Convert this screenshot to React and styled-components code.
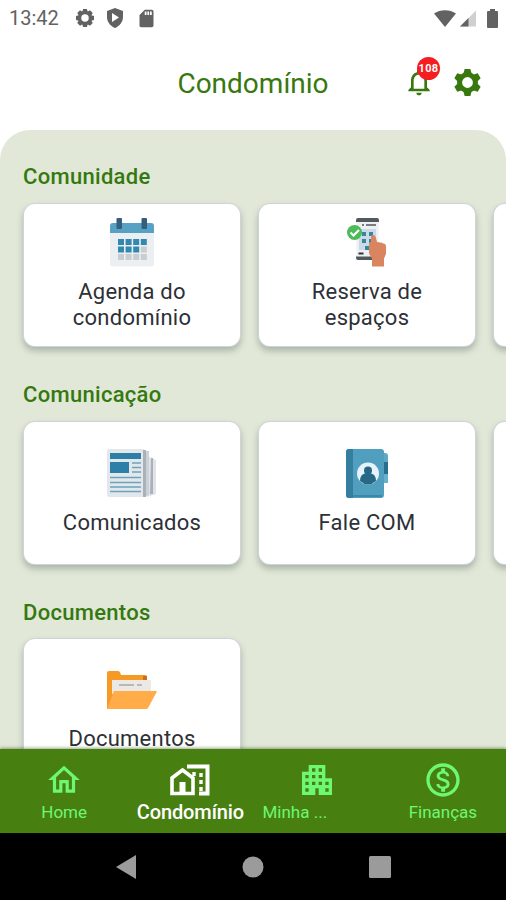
import React from 'react';
import styled, { createGlobalStyle } from 'styled-components';
import {
  MdApartment,
  MdNotificationsNone,
  MdOutlineHome,
  MdOutlineMonetizationOn,
  MdSdCard,
} from 'react-icons/md';

const GlobalStyle = createGlobalStyle`
  * {
    box-sizing: border-box;
  }
  body {
    margin: 0;
    background: #fff;
    font-family: Roboto, 'Liberation Sans', sans-serif;
    overflow: hidden;
  }
  svg {
    display: block;
    flex-shrink: 0;
  }
`;

const Screen = styled.div`
  width: 506px;
  height: 900px;
  display: flex;
  flex-direction: column;
  overflow: hidden;
`;

const StatusBar = styled.div`
  height: 36px;
  display: flex;
  align-items: center;
  justify-content: space-between;
  padding: 0 8px 0 9px;
  color: #626262;
`;

const StatusGroup = styled.div`
  display: flex;
  align-items: center;
  gap: ${(props) => props.$gap}px;
`;

const Clock = styled.span`
  font-size: 20px;
  line-height: 36px;
  margin-right: 5px;
`;

const Battery = styled.div`
  margin-left: 7px;
`;

const Header = styled.header`
  height: 94px;
  display: grid;
  grid-template-columns: 1fr auto 1fr;
  align-items: center;
  color: #38780f;
`;

const PageTitle = styled.h1`
  grid-column: 2;
  margin: 1px 0 0;
  font-size: 28px;
  line-height: 34px;
  font-weight: 400;
`;

const Actions = styled.div`
  display: flex;
  align-items: center;
  justify-content: flex-end;
  gap: 19px;
  padding: 0 25px 2px 0;
`;

const Bell = styled.div`
  position: relative;
`;

const Badge = styled.span`
  position: absolute;
  top: -9px;
  right: -5px;
  width: 23px;
  height: 23px;
  border-radius: 50%;
  background: #f51d1f;
  color: #fff;
  font-size: 11px;
  line-height: 23px;
  font-weight: 700;
  letter-spacing: 0.3px;
  text-align: center;
`;

const Panel = styled.main`
  flex: 1;
  min-height: 0;
  overflow: hidden;
  padding: 30px 0 0 24px;
  border-radius: 30px 30px 0 0;
  background: #e2e8d8;
`;

const SectionTitle = styled.h2`
  margin: 0 0 10px -1px;
  font-size: 22px;
  line-height: 34px;
  font-weight: 500;
  letter-spacing: 0.3px;
  color: #34790f;
`;

const Section = styled.section`
  height: 218px;
  &:last-child ${SectionTitle} {
    margin-bottom: 9px;
  }
`;

const CardRow = styled.div`
  display: flex;
  gap: 19px;
`;

const Card = styled.div`
  flex: 0 0 216px;
  height: 142px;
  display: flex;
  flex-direction: column;
  align-items: center;
  justify-content: center;
  padding-bottom: 2px;
  border-radius: 11px;
  background: #fff;
  box-shadow: 0 0 0 1px #cdd5d8, 0 4px 6px 1px rgba(90, 105, 100, 0.4);
`;

const CardLabel = styled.span`
  margin-top: 12px;
  max-width: 150px;
  font-size: 22px;
  line-height: 26px;
  letter-spacing: 0.25px;
  text-align: center;
  color: #2d3036;
`;

const TabBar = styled.nav`
  height: 84px;
  display: grid;
  grid-template-columns: repeat(4, 1fr);
  padding-left: 1px;
  background: #487f11;
  box-shadow: 0 -1px 3px rgba(50, 80, 20, 0.5);
  z-index: 1;
`;

const Tab = styled.div`
  display: flex;
  flex-direction: column;
  align-items: center;
  padding-top: 11px;
  color: ${(props) => (props.$active ? '#fff' : '#6cf872')};
`;

const TabIcon = styled.div`
  height: 40px;
  display: flex;
  align-items: center;
`;

const TabLabel = styled.span`
  align-self: ${(props) => (props.$start ? 'flex-start' : 'center')};
  padding-left: ${(props) => (props.$start ? 9 : 0)}px;
  font-size: ${(props) => (props.$active ? 20 : 17)}px;
  font-weight: ${(props) => (props.$active ? 500 : 400)};
  line-height: 24px;
  letter-spacing: ${(props) => (props.$active ? -0.1 : 0)}px;
  white-space: nowrap;
`;

const SystemBar = styled.div`
  height: 67px;
  display: grid;
  grid-template-columns: repeat(3, 127px);
  justify-content: center;
  justify-items: center;
  align-items: center;
  background: #000;
  color: #9b9b9b;
`;

function GearIcon({ size, teeth, hole }) {
  const angles = Array.from({ length: teeth }, (_, i) => (360 / teeth) * i);
  return (
    <svg width={size} height={size} viewBox="0 0 28 28" fill="currentColor">
      {angles.map((angle) => (
        <path key={angle} d="M11 0h6l1.500 6h-9z" transform={`rotate(${angle} 14 14)`} />
      ))}
      <circle cx="14" cy="14" r={(10.8 + hole) / 2} fill="none" stroke="currentColor" strokeWidth={10.8 - hole} />
    </svg>
  );
}

function ShieldIcon() {
  return (
    <svg width="18" height="20" viewBox="0 0 18 20" fill="currentColor">
      <path fillRule="evenodd" d="M9 0l8 3v6c0 5-3.200 8.900-8 11-4.800-2.100-8-6-8-11V3zM6 5v9l7-4.500z" />
    </svg>
  );
}

function WifiIcon() {
  return (
    <svg width="22" height="17" viewBox="0 0 22 17" fill="currentColor">
      <path d="M0 3.500C6-1 16-1 22 3.500L11 17z" />
    </svg>
  );
}

function SignalIcon() {
  return (
    <svg width="16" height="17" viewBox="0 0 17 17">
      <path d="M17 0v17H0z" fill="#d0d0d0" />
      <path d="M9 8v9H0z" fill="currentColor" />
    </svg>
  );
}

function BatteryIcon() {
  return (
    <svg width="11" height="19" viewBox="0 0 11 19" fill="currentColor">
      <path d="M3 0h5v2h2q1 0 1 1v15q0 1-1 1H1q-1 0-1-1V3q0-1 1-1h2z" />
    </svg>
  );
}

function CalendarIcon() {
  const cells = [0, 1, 2, 3, 4, 5, 6, 7, 8, 9, 10, 11];
  return (
    <svg width="44" height="49" viewBox="0 0 44 49">
      <rect y="5" width="44" height="43.500" rx="3" fill="#eceff2" />
      <path d="M0 15V8q0-3 3-3h38q3 0 3 3v7z" fill="#56a2c5" />
      <rect x="6.500" y="0" width="5.500" height="11" rx="1" fill="#365d7e" />
      <rect x="31.500" y="0" width="5.500" height="11" rx="1" fill="#365d7e" />
      {cells.map((i) => (
        <rect
          key={i}
          x={8 + (i % 4) * 7.6}
          y={21 + Math.floor(i / 4) * 7.5}
          width="6"
          height="6"
          fill={i < 7 ? '#3288ae' : '#c9cdcf'}
        />
      ))}
    </svg>
  );
}

function BookingIcon() {
  return (
    <svg width="40" height="49" viewBox="0 0 40 49">
      <rect x="9.500" y="0" width="22" height="42" rx="2" fill="#edf0f4" />
      <path d="M9 4V2q0-2 2-2h19q2 0 2 2v2zM9 38.500h23V40q0 2-2 2H11q-2 0-2-2z" fill="#525a5e" />
      <path d="M15 7h2M19 7h10" stroke="#555" strokeWidth="1.500" />
      <path d="M11.500 35.500h5" stroke="#333" strokeWidth="2" />
      <rect x="12" y="11" width="17" height="21" fill="#cbdbe6" />
      <path
        d="M15 14h4v4h-4zM22 14h4v4h-4zM15 21h4v4h-4zM22 21h4v4h-4zM18 28h6v4h-6z"
        fill="#39869f"
      />
      <path
        d="M26 17q2.500 0 3 3l1 4 3 .5q2-.5 3 1 3-.5 3 2.500v8l-2 4.500v8H25v-8l-3-5V26q0-2 2-2V19q0-2 2-2z"
        fill="#d98660"
      />
      <circle cx="7.500" cy="14.500" r="7.500" fill="#4dbb59" />
      <path d="M3.500 14.500l3 3 5.500-5.500" fill="none" stroke="#fff" strokeWidth="2.200" />
    </svg>
  );
}

function NewsIcon() {
  return (
    <svg width="50" height="49" viewBox="0 0 50 49">
      <path d="M40 7l9 4v34l-9 3z" fill="#e0e4e8" />
      <path d="M37 2h5v44l-5 2z" fill="#ccd1d7" />
      <path d="M44 9h2v36h-3z" fill="#aab1b8" />
      <rect width="38" height="48" rx="2" fill="#e2e7ec" />
      <path d="M36 1h3v47h-3z" fill="#aab1b8" />
      <rect x="3" y="4" width="31" height="6" fill="#2c7fa7" />
      <rect x="3" y="13" width="19" height="11" fill="#2c7fa7" />
      <path d="M25 14h9M25 18.500h9M25 23h9M3 28.500h31M3 33.500h31M3 38h31M3 42.500h31" stroke="#6ca3ba" strokeWidth="1.700" />
    </svg>
  );
}

function ContactsIcon() {
  return (
    <svg width="43" height="49" viewBox="0 0 43 49">
      <path d="M35 4h4q3 0 3 3v9h-7z" fill="#5ea8c6" />
      <path d="M35 13h7v12h-7z" fill="#286e91" />
      <path d="M35 25h7v9h-7z" fill="#66b0cd" />
      <rect width="38" height="49" rx="3" fill="#519fbf" />
      <path d="M3 0h4v49H3q-3 0-3-3V3q0-3 3-3z" fill="#347fa0" />
      <path d="M2 47h34" stroke="#3581a1" strokeWidth="1.500" />
      <circle cx="22" cy="24.500" r="11" fill="#e8f2fa" />
      <circle cx="22" cy="21.500" r="4" fill="#286887" />
      <path d="M14 32q0-7 6-8h4q6 1 6 8-8 7-16 0z" fill="#286887" />
    </svg>
  );
}

function FolderIcon() {
  return (
    <svg width="50" height="48" viewBox="0 -5 50 48">
      <path d="M0 38V2q0-2 2-2h9q2 0 3 4h24q2 0 2 2v31z" fill="#f49a25" />
      <path d="M36 5h4v6h-4z" fill="#c96e24" />
      <path d="M5 9h39v14H5z" fill="#ece8e3" />
      <path d="M12 14h15M30 14h5" stroke="#b9b8b6" strokeWidth="2" />
      <path d="M7 20h42q1 0 .7 1l-8.700 16q-.5 1-2 1H0z" fill="#ffac49" />
    </svg>
  );
}

function CondoIcon() {
  return (
    <svg width="40" height="34" viewBox="0 0 40 34" fill="none" stroke="currentColor">
      <path d="M17 3.500h20.500v27H29" strokeWidth="4" />
      <path d="M2 30.500V15l10.500-8L23 15v15.500z" strokeWidth="3.600" />
      <path d="M12.500 30V19" strokeWidth="6" />
      <path d="M31 10v4M31 17v4M31 24v4M24 9v4" strokeWidth="3.400" />
    </svg>
  );
}

const sections = [
  {
    title: 'Comunidade',
    cards: [
      { label: 'Agenda do condomínio', icon: <CalendarIcon /> },
      { label: 'Reserva de espaços', icon: <BookingIcon /> },
      {},
    ],
  },
  {
    title: 'Comunicação',
    cards: [{ label: 'Comunicados', icon: <NewsIcon /> }, { label: 'Fale COM', icon: <ContactsIcon /> }, {}],
  },
  {
    title: 'Documentos',
    cards: [{ label: 'Documentos', icon: <FolderIcon /> }],
  },
];

const tabs = [
  { label: 'Home', icon: <MdOutlineHome size={38} /> },
  { label: 'Condomínio', icon: <CondoIcon />, active: true },
  { label: 'Minha ...', icon: <MdApartment size={40} />, start: true },
  { label: 'Finanças', icon: <MdOutlineMonetizationOn size={40} /> },
];

function App() {
  return (
    <>
      <GlobalStyle />
      <Screen>
        <StatusBar>
          <StatusGroup $gap={12}>
            <Clock>13:42</Clock>
            <GearIcon size={18} teeth={8} hole={5.8} />
            <ShieldIcon />
            <MdSdCard size={21} />
          </StatusGroup>
          <StatusGroup $gap={4}>
            <WifiIcon />
            <SignalIcon />
            <Battery>
              <BatteryIcon />
            </Battery>
          </StatusGroup>
        </StatusBar>
        <Header>
          <PageTitle>Condomínio</PageTitle>
          <Actions>
            <Bell>
              <MdNotificationsNone size={32} />
              <Badge>108</Badge>
            </Bell>
            <GearIcon size={27} teeth={6} hole={5.6} />
          </Actions>
        </Header>
        <Panel>
          {sections.map((section) => (
            <Section key={section.title}>
              <SectionTitle>{section.title}</SectionTitle>
              <CardRow>
                {section.cards.map((card, index) => (
                  <Card key={index}>
                    {card.icon}
                    {card.label && <CardLabel>{card.label}</CardLabel>}
                  </Card>
                ))}
              </CardRow>
            </Section>
          ))}
        </Panel>
        <TabBar>
          {tabs.map((tab) => (
            <Tab key={tab.label} $active={tab.active}>
              <TabIcon>{tab.icon}</TabIcon>
              <TabLabel $active={tab.active} $start={tab.start}>
                {tab.label}
              </TabLabel>
            </Tab>
          ))}
        </TabBar>
        <SystemBar>
          <svg width="20" height="24" viewBox="0 0 20 24" fill="currentColor">
            <path d="M0 12L20 0v24z" />
          </svg>
          <svg width="22" height="22" viewBox="0 0 22 22" fill="currentColor">
            <circle cx="11" cy="11" r="10.500" />
          </svg>
          <svg width="22" height="22" viewBox="0 0 22 22" fill="currentColor">
            <rect width="22" height="22" rx="1.500" />
          </svg>
        </SystemBar>
      </Screen>
    </>
  );
}

export default App;
